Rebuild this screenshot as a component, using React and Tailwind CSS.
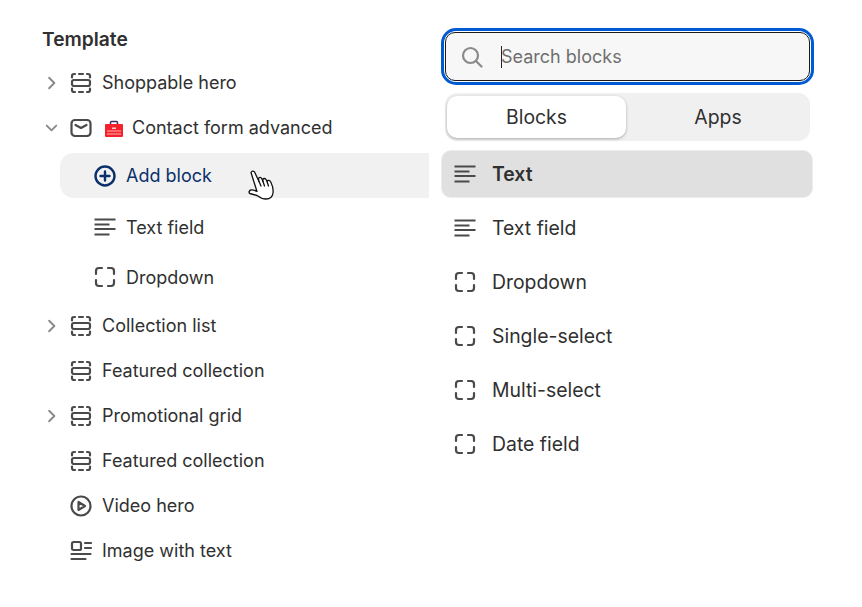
const C = "#4a4a4a";
const Chevron = ({ open }) => (
  <svg width="20" height="20" viewBox="0 0 20 20" fill="none" stroke="#8a8a8a" strokeWidth="2" strokeLinecap="round" strokeLinejoin="round">
    {open ? <path d="M5 7.500 10 12.500 15 7.500" /> : <path d="M7.500 4.500 13 10 7.500 15.500" />}
  </svg>
);
const Section = () => (
  <svg width="22" height="22" viewBox="0 0 22 22" fill="none" stroke={C} strokeWidth="2.200" strokeLinecap="round">
    <path d="M2 5.500V4a2 2 0 0 1 2-2h1M9 2h4M17 2h1a2 2 0 0 1 2 2v1.500M2 16.500V18a2 2 0 0 0 2 2h1M9 20h4M17 20h1a2 2 0 0 0 2-2v-1.500" />
    <rect x="2" y="8" width="18" height="6" rx="2" />
  </svg>
);
const Mail = () => (
  <svg width="22" height="22" viewBox="0 0 22 22" fill="none" stroke={C} strokeWidth="2.200" strokeLinecap="round" strokeLinejoin="round">
    <rect x="1.500" y="3" width="19" height="16" rx="3.500" />
    <path d="M5.500 8 11 11 16.500 8" />
  </svg>
);
const Toolbox = () => (
  <svg width="20" height="20" viewBox="0 0 20 20">
    <path d="M6.500 6V4.500A1 1 0 0 1 7.500 3.500h5a1 1 0 0 1 1 1V6" fill="none" stroke="#3f2f5f" strokeWidth="1.500" />
    <rect x="1" y="6" width="18" height="13" rx="1" fill="#f5222d" />
    <path d="M3 13h14M3 16h14" stroke="#ffb3b3" strokeWidth="1" />
    <rect x="8" y="9.500" width="4" height="1.500" fill="#ffc9c9" />
  </svg>
);
const Plus = () => (
  <svg width="22" height="22" viewBox="0 0 22 22" fill="none" stroke="#0b2f6b" strokeWidth="2.400" strokeLinecap="round">
    <circle cx="11" cy="11" r="9.500" />
    <path d="M11 6.500v9M6.500 11h9" />
  </svg>
);
const Lines = () => (
  <svg width="22" height="22" viewBox="0 0 22 22" fill="none" stroke={C} strokeWidth="2.200">
    <path d="M0.500 3.500h21M0.500 8.500h15M0.500 13h21M0.500 18.500h15" />
  </svg>
);
const Corners = () => (
  <svg width="22" height="22" viewBox="0 0 22 22" fill="none" stroke={C} strokeWidth="2.200" strokeLinecap="round">
    <path d="M2 8V5a3 3 0 0 1 3-3h3M14 2h3a3 3 0 0 1 3 3v3M2 14v3a3 3 0 0 0 3 3h3M14 20h3a3 3 0 0 0 3-3v-3" />
  </svg>
);
const Play = () => (
  <svg width="22" height="22" viewBox="0 0 22 22" fill="none" stroke={C} strokeWidth="2.200" strokeLinejoin="round">
    <circle cx="11" cy="11" r="9.500" />
    <path d="M8.500 7v8l6.500-4z" />
  </svg>
);
const ImageText = () => (
  <svg width="22" height="22" viewBox="0 0 22 22" fill="none" stroke={C} strokeWidth="2.200" strokeLinecap="round">
    <rect x="2" y="2" width="9" height="8" rx="1.500" />
    <path d="M15 3h6M15 8h6M1.500 14h19M1.500 19h14" />
  </svg>
);
const Search = () => (
  <svg width="22" height="22" viewBox="0 0 22 22" fill="none" stroke="#8a8a8a" strokeWidth="2.200" strokeLinecap="round">
    <circle cx="9.500" cy="9.500" r="7.500" />
    <path d="M15 15l5.500 5.500" />
  </svg>
);
const Hand = () => (
  <svg width="28" height="32" viewBox="0 0 28 32" fill="#fff" stroke="#111" strokeWidth="1.300" strokeLinejoin="round" strokeLinecap="round">
    <path d="M3 3.500C4 1.500 6 2 6.800 3.500L11 12.500 10.500 9.500C11 7.800 13 8 13.700 9.500L15 12.500 14.800 10.500C15.500 9 17.500 9.200 18.200 10.800L19.200 13 19.200 12C20 10.800 22 11.200 22.800 13 24.500 16.500 25.500 20 25 24 24.500 28 21.500 30 18 30 14 30 11 28 9 26.500L1.800 24.500C.5 23.500 1 21.500 3 21 5 20.700 7 21.500 9 22.500Z" />
    <path d="M11 12.500 13 17M15 12.500 16.500 17M19.200 13 20.500 17" fill="none" />
  </svg>
);
const Row = ({ chevron, icon, children }) => (
  <div className="flex h-[45px] items-center">
    <div className="flex w-[19px] justify-center">{chevron !== undefined && <Chevron open={chevron} />}</div>
    <div className="ml-[9px] flex w-[22px] justify-center">{icon}</div>
    <div className="ml-[10px] flex items-center">{children}</div>
  </div>
);
const Sub = ({ icon, label, className }) => (
  <div className={`flex items-center pl-[52px] ${className}`}>
    <div className="flex w-[22px] justify-center">{icon}</div>
    <span className="ml-[10px]">{label}</span>
  </div>
);
const Item = ({ icon, label }) => (
  <div className="flex h-[54px] items-center pl-[13px]">
    {icon}
    <span className="ml-[16px]">{label}</span>
  </div>
);

export default function App() {
  return (
    <div className="flex h-[607px] w-[862px] overflow-hidden bg-white text-[18px] text-[#303030]" style={{ fontFamily: "Inter, sans-serif" }}>
      <div className="w-[429px] shrink-0 pl-[42px] pt-[27px]">
        <div className="flex h-[24px] items-center text-[19.200px] font-semibold">Template</div>
        <div className="mt-[9px]">
          <Row chevron={false} icon={<Section />}>Shoppable hero</Row>
          <Row chevron={true} icon={<Mail />}>
            <span className="ml-[2px] mr-[8px]"><Toolbox /></span>Contact form advanced
          </Row>
          <div className="relative ml-[18px] mt-[3px] flex h-[45px] items-center rounded-l-[14px] bg-[#f1f1f1] pl-[34px] text-[#0b2f6b]">
            <Plus />
            <span className="ml-[10px]">Add block</span>
            <div className="absolute left-[188px] top-[16px]"><Hand /></div>
          </div>
          <Sub icon={<Lines />} label="Text field" className="h-[57px] pt-[1px]" />
          <Sub icon={<Corners />} label="Dropdown" className="h-[44px]" />
          <div className="mt-[4px]">
            <Row chevron={false} icon={<Section />}>Collection list</Row>
            <Row icon={<Section />}>Featured collection</Row>
            <Row chevron={false} icon={<Section />}>Promotional grid</Row>
            <Row icon={<Section />}>Featured collection</Row>
            <Row icon={<Play />}>Video hero</Row>
            <Row icon={<ImageText />}>Image with text</Row>
          </div>
        </div>
      </div>
      <div className="w-[385px] shrink-0 pl-[12px] pt-[28px] text-[19.400px] leading-[30px]">
        <div className="h-[57px] w-[373px] rounded-[15px] border-[3px] border-[#005bd3] bg-white p-[1px]">
          <div className="flex h-full items-center rounded-[10px] border border-[#1a1a1a] bg-[#f7f7f7] pl-[15px] text-[18px]">
            <Search />
            <div className="ml-[18px] flex items-center text-[#6f6f6f]">
              <span className="h-[22px] w-[1px] bg-[#222]" />
              <span className="ml-[-1px]">Search blocks</span>
            </div>
          </div>
        </div>
        <div className="ml-[4px] mt-[8px] flex h-[48px] w-[365px] rounded-[12px] bg-[#f0f0f0] py-[3px] pl-[2px]">
          <div className="flex h-[42px] w-[179px] items-center justify-center rounded-[10px] bg-white shadow-[0_1px_3px_rgba(0,0,0,0.3)]">Blocks</div>
          <div className="flex flex-1 items-center justify-center">Apps</div>
        </div>
        <div className="mt-[9px] flex h-[48px] w-[372px] items-center rounded-[10px] border border-[#ececec] bg-[#e0e0e0] pl-[12px] font-semibold">
          <Lines />
          <span className="ml-[16px]">Text</span>
        </div>
        <div className="mt-[3px]">
          <Item icon={<Lines />} label="Text field" />
          <Item icon={<Corners />} label="Dropdown" />
          <Item icon={<Corners />} label="Single-select" />
          <Item icon={<Corners />} label="Multi-select" />
          <Item icon={<Corners />} label="Date field" />
        </div>
      </div>
    </div>
  );
}
